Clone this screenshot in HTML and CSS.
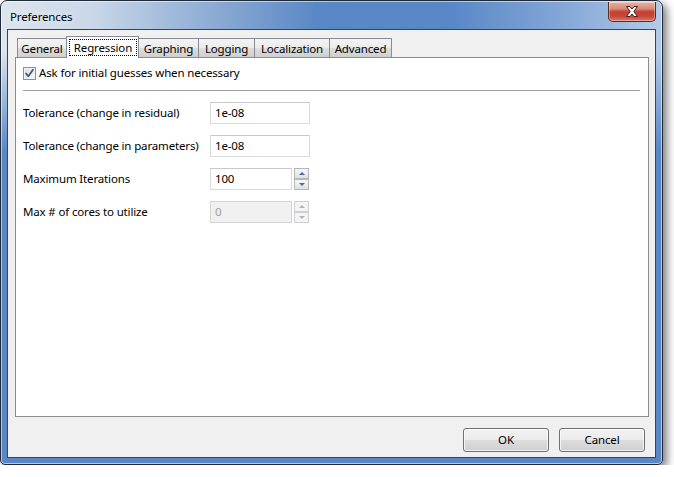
FILE: index.html
```html
<!DOCTYPE html>
<html>
<head>
<meta charset="utf-8">
<title>Preferences</title>
<link rel="stylesheet" href="styles.css">
</head>
<body>
<div class="window">
  <div class="titlebar">
    <span class="title">Preferences</span>
    <div class="close">
      <svg width="14" height="11" viewBox="0 0 14 11">
        <path d="M1.5 0.5 H5 L7 3 L9 0.5 H12.5 L8.8 5.5 L12.5 10.5 H9 L7 8 L5 10.5 H1.5 L5.2 5.5 Z" fill="#fff" stroke="#4a1d18" stroke-width="1" stroke-linejoin="round"/>
      </svg>
    </div>
  </div>
  <div class="client">
    <div class="tabs">
      <div class="tab w-general">General</div>
      <div class="tab selected w-regression"><span class="focus">Regression</span></div>
      <div class="tab w-graphing">Graphing</div>
      <div class="tab w-logging">Logging</div>
      <div class="tab w-localization">Localization</div>
      <div class="tab w-advanced">Advanced</div>
    </div>
    <div class="pane">
      <div class="checkline">
        <span class="checkbox">
          <svg width="11" height="11" viewBox="0 0 11 11">
            <path d="M2 5.5 L4.3 8.3 L9 1.8" fill="none" stroke="#3f5597" stroke-width="1.8" stroke-linecap="round" stroke-linejoin="round"/>
          </svg>
        </span>
        <span>Ask for initial guesses when necessary</span>
      </div>
      <div class="separator"></div>
      <div class="form">
        <div class="row">
          <span class="label">Tolerance (change in residual)</span>
          <div class="field wide">1e-08</div>
        </div>
        <div class="row">
          <span class="label">Tolerance (change in parameters)</span>
          <div class="field wide">1e-08</div>
        </div>
        <div class="row">
          <span class="label">Maximum Iterations</span>
          <div class="field narrow">100</div>
          <div class="spinner">
            <div class="spin up"><span class="arrow-up"></span></div>
            <div class="spin down"><span class="arrow-down"></span></div>
          </div>
        </div>
        <div class="row">
          <span class="label">Max # of cores to utilize</span>
          <div class="field narrow disabled">0</div>
          <div class="spinner disabled">
            <div class="spin up"><span class="arrow-up"></span></div>
            <div class="spin down"><span class="arrow-down"></span></div>
          </div>
        </div>
      </div>
    </div>
    <div class="buttons">
      <div class="button">OK</div>
      <div class="button">Cancel</div>
    </div>
  </div>
</div>
</body>
</html>
```
FILE: styles.css
```css
* { box-sizing: border-box; }
html, body { margin: 0; padding: 0; background: #fff; }
body {
  font-family: "Noto Sans", "Open Sans", "DejaVu Sans", sans-serif;
  font-size: 11.5px;
  letter-spacing: -0.15px;
  color: #000;
}

.window {
  width: 663px;
  height: 465px;
  border: 1px solid #1f2a38;
  border-radius: 7px 7px 5px 5px;
  padding: 0 6px 6px 6px;
  background:
    linear-gradient(to bottom, rgba(89,134,199,0) 0, rgba(89,134,199,0) 50px, rgba(89,134,199,1) 150px),
    linear-gradient(to right, #dde5ee 0%, #c9d7e8 14%, #93b0d6 30%, #5a87c5 48%, #5987c7 68%, #86a9d8 86%, #b3cbe8 100%);
  box-shadow: inset 0 0 0 1px rgba(255,255,255,0.55), 4px 4px 9px rgba(0,0,0,0.5);
  display: flex;
  flex-direction: column;
}

.titlebar {
  height: 28px;
  display: flex;
  align-items: flex-start;
}
.title {
  margin: 8px 0 0 3px;
  line-height: 16px;
  color: #000;
  text-shadow: 0 0 6px rgba(255,255,255,0.9);
}
.close {
  margin-left: auto;
  margin-top: 1px;
  width: 48px;
  height: 20px;
  border: 1px solid #5c2a24;
  border-top: none;
  border-radius: 0 0 5px 5px;
  background: linear-gradient(to bottom, #e8b3a6 0%, #d88a7a 35%, #c2402f 52%, #c5483a 75%, #d97a64 100%);
  box-shadow: inset 0 0 0 1px rgba(255,255,255,0.35);
  display: flex;
  align-items: center;
  justify-content: center;
}

.client {
  height: 429px;
  border: 1px solid #394454;
  background: #f0f0f0;
  padding: 6px 0 5px 0;
  display: flex;
  flex-direction: column;
}

.tabs {
  height: 21px;
  margin-left: 9px;
  display: flex;
  align-items: flex-start;
}
.tab {
  height: 19px;
  margin-top: 2px;
  margin-left: -1px;
  border: 1px solid #898c95;
  border-bottom: none;
  background: linear-gradient(to bottom, #f3f3f3 0%, #ebebeb 50%, #dddddd 51%, #cfcfcf 100%);
  display: flex;
  align-items: center;
  justify-content: center;
  padding-top: 1px;
  line-height: 16px;
  white-space: nowrap;
}
.tab:first-child { margin-left: 0; }
.tab.selected {
  height: 22px;
  margin-top: 0;
  background: #fff;
  position: relative;
  z-index: 1;
  padding: 2px 1px 2px 2px;
  align-items: stretch;
}
.focus {
  flex: 1;
  border: 1px dotted #000;
  display: flex;
  align-items: center;
  justify-content: center;
}
.w-general { width: 50px; }
.w-regression { width: 73px; }
.w-graphing { width: 61px; }
.w-logging { width: 57px; }
.w-localization { width: 76px; }
.w-advanced { width: 63px; }

.pane {
  height: 360px;
  margin: 0 6px 0 7px;
  border: 1px solid #898c95;
  background: #fff;
  padding: 8px 8px 0 7px;
}

.checkline {
  height: 14px;
  display: flex;
  align-items: center;
  gap: 3px;
  line-height: 16px;
}
.checkbox {
  width: 13px;
  height: 13px;
  border: 1px solid #8e8f8f;
  background: linear-gradient(135deg, #dcdcdc 0%, #f0f0f0 60%, #fbfbfb 100%);
  box-shadow: inset 0 0 0 1px #f4f4f4;
  display: flex;
  align-items: center;
  justify-content: center;
}

.separator {
  margin-top: 10px;
  height: 1px;
  background: #a0a0a0;
  box-shadow: 0 1px 0 #fff;
}

.form {
  margin-top: 11px;
  display: flex;
  flex-direction: column;
  gap: 11px;
}
.row {
  height: 22px;
  display: flex;
  align-items: center;
}
.label {
  width: 187px;
  line-height: 16px;
  white-space: nowrap;
}
.field {
  height: 22px;
  border: 1px solid #dadada;
  border-top-color: #c9c9c9;
  background: #fff;
  padding: 0 4px;
  display: flex;
  align-items: center;
  line-height: 16px;
}
.field.wide { width: 100px; }
.field.narrow { width: 82px; }
.field.disabled {
  background: #f0f0f0;
  color: #a0a0a0;
  border-color: #d4d4d4;
}
.spinner {
  margin-left: 2px;
  width: 15px;
  height: 22px;
  display: flex;
  flex-direction: column;
}
.spin {
  height: 11px;
  border: 1px solid #b4b6ba;
  background: linear-gradient(to bottom, #f7f7f7 0%, #ececec 50%, #dfdfdf 100%);
  display: flex;
  align-items: center;
  justify-content: center;
}
.arrow-up, .arrow-down {
  width: 0; height: 0;
  border-left: 3px solid transparent;
  border-right: 3px solid transparent;
}
.arrow-up { border-bottom: 3px solid #4b6aa6; }
.arrow-down { border-top: 3px solid #4b6aa6; }
.spinner.disabled .spin { border-color: #cdcfd2; background: #f4f4f4; }
.spinner.disabled .arrow-up { border-bottom-color: #b5b5b5; }
.spinner.disabled .arrow-down { border-top-color: #b5b5b5; }

.buttons {
  margin-top: 11px;
  padding-right: 10px;
  display: flex;
  justify-content: flex-end;
  gap: 10px;
}
.button {
  width: 86px;
  height: 24px;
  border: 1px solid #707070;
  border-radius: 3px;
  background: linear-gradient(to bottom, #f2f2f2 0%, #ebebeb 50%, #dddddd 51%, #cfcfcf 100%);
  box-shadow: inset 0 0 0 1px rgba(255,255,255,0.7);
  display: flex;
  align-items: center;
  justify-content: center;
  line-height: 16px;
}
```
